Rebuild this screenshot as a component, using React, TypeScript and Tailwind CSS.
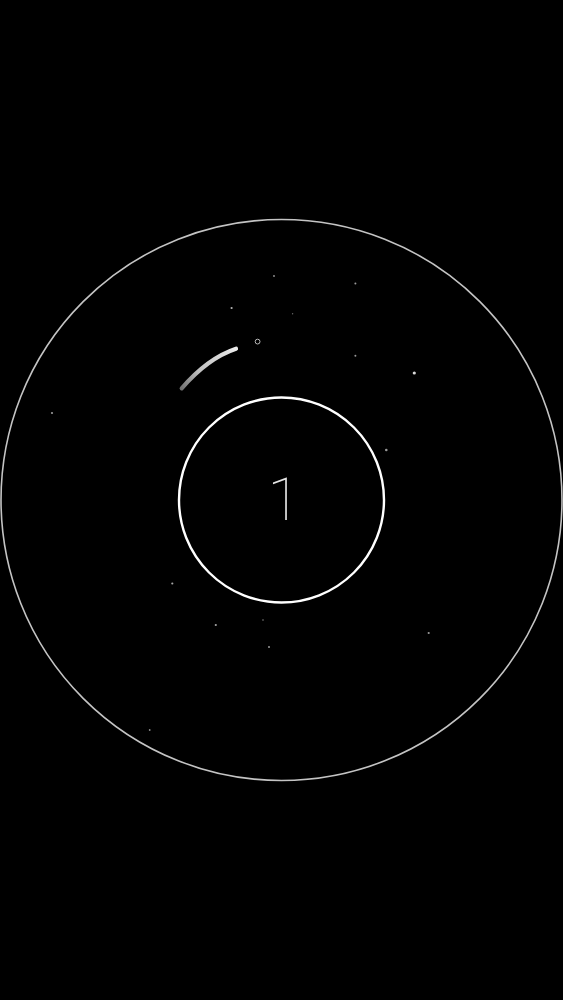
import React from "react";

const dots: { x: number; y: number; r: number; o: number }[] = [
  { x: 274, y: 276, r: 0.9, o: 0.6 },
  { x: 355.4, y: 283.4, r: 1, o: 0.6 },
  { x: 231.6, y: 308, r: 1.1, o: 0.7 },
  { x: 292.6, y: 313.7, r: 0.7, o: 0.4 },
  { x: 355.4, y: 355.8, r: 1, o: 0.6 },
  { x: 414.3, y: 373, r: 1.6, o: 0.85 },
  { x: 52, y: 413, r: 1.1, o: 0.6 },
  { x: 386.3, y: 450, r: 1.3, o: 0.6 },
  { x: 172.3, y: 583.5, r: 1.1, o: 0.65 },
  { x: 215.8, y: 625, r: 1.1, o: 0.65 },
  { x: 263, y: 620, r: 0.8, o: 0.5 },
  { x: 269, y: 647, r: 1, o: 0.6 },
  { x: 428.7, y: 633, r: 1.1, o: 0.6 },
  { x: 149.7, y: 730, r: 0.9, o: 0.55 },
];

export default function App() {
  return (
    <div className="relative h-[1000px] w-full overflow-hidden bg-black">
      <svg
        className="absolute inset-0"
        width="563"
        height="1000"
        viewBox="0 0 563 1000"
      >
        <defs>
          <linearGradient id="arcg" x1="181.7" y1="388.3" x2="236" y2="348.7" gradientUnits="userSpaceOnUse">
            <stop offset="0" stopColor="#ffffff" stopOpacity="0.45" />
            <stop offset="0.35" stopColor="#ffffff" stopOpacity="0.75" />
            <stop offset="1" stopColor="#ffffff" stopOpacity="0.92" />
          </linearGradient>
        </defs>
        <circle cx="281.5" cy="500" r="280.5" fill="none" stroke="#c4c4c4" strokeWidth="1.6" />
        <circle cx="281.5" cy="500" r="102.5" fill="none" stroke="#ffffff" strokeWidth="2.4" />
        <path
          d="M181.7 388.3 Q207.75 358.1 236 348.7"
          fill="none"
          stroke="url(#arcg)"
          strokeWidth="4.2"
          strokeLinecap="round"
        />
        <circle cx="257.6" cy="341.6" r="2.4" fill="none" stroke="#bbbbbb" strokeWidth="1" />
        {dots.map((d, i) => (
          <circle key={i} cx={d.x} cy={d.y} r={d.r} fill="#ffffff" fillOpacity={d.o} />
        ))}
      </svg>
      <div className="absolute left-[181px] top-[397px] flex h-[206px] w-[206px] items-center justify-center">
        <span
          className="text-[60px] leading-none text-[#e6e6e6]"
          style={{ fontFamily: "Roboto, 'Liberation Sans', sans-serif", fontWeight: 100 }}
        >
          1
        </span>
      </div>
    </div>
  );
}
